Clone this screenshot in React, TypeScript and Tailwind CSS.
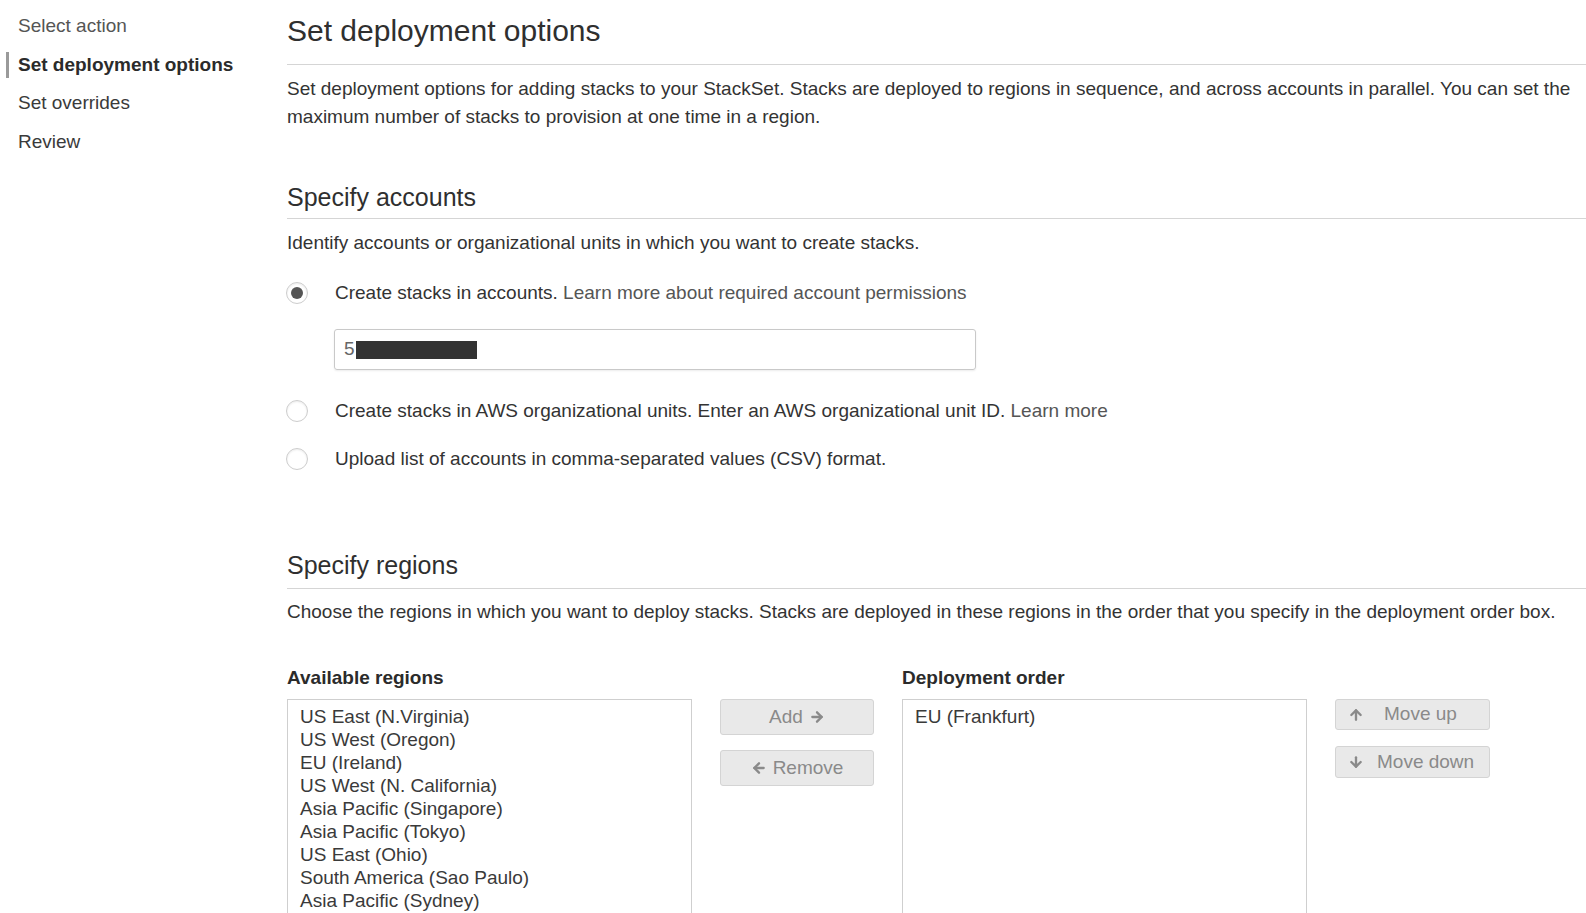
import { ArrowRight, ArrowLeft, ArrowUp, ArrowDown } from 'lucide-react';

const steps = ['Select action', 'Set deployment options', 'Set overrides', 'Review'];

const regions = [
  'US East (N.Virginia)',
  'US West (Oregon)',
  'EU (Ireland)',
  'US West (N. California)',
  'Asia Pacific (Singapore)',
  'Asia Pacific (Tokyo)',
  'US East (Ohio)',
  'South America (Sao Paulo)',
  'Asia Pacific (Sydney)',
];

function Radio({ checked }: { checked?: boolean }) {
  return (
    <span className="flex h-[22px] w-[22px] items-center justify-center rounded-full border border-[#cdcdcd] bg-white shadow-[inset_0_1px_2px_rgba(0,0,0,0.08)]">
      {checked && <span className="h-[12px] w-[12px] rounded-full bg-[#555]" />}
    </span>
  );
}

function GrayButton({ children, className }: { children: React.ReactNode; className: string }) {
  return (
    <button
      type="button"
      disabled
      className={`flex items-center rounded-[3px] border border-[#d4d4d4] bg-[#e9e9e9] text-[19px] text-[#8a8a8a] ${className}`}
    >
      {children}
    </button>
  );
}

export default function App() {
  return (
    <div
      className="flex h-[913px] w-[1586px] overflow-hidden bg-white text-[#333]"
      style={{ fontFamily: '"Liberation Sans", Arial, sans-serif' }}
    >
      {/* Step nav */}
      <nav className="w-[287px] shrink-0 pt-[7px]">
        {steps.map((s, i) => (
          <div
            key={s}
            className={`flex h-[38.5px] items-center text-[19px] ${i === 1 ? 'font-bold text-[#2b2b2b]' : i === 0 ? 'text-[#555]' : 'text-[#3a3a3a]'}`}
          >
            <span className={`ml-[6px] mr-[9px] h-[26px] w-[3px] ${i === 1 ? 'bg-[#9a9a9a]' : ''}`} />
            {s}
          </div>
        ))}
      </nav>

      {/* Main */}
      <main className="block min-w-0 flex-1">
        <h1 className="pt-[14px] text-[30px] leading-[34px] text-[#2f2f2f]">Set deployment options</h1>
        <div className="mt-[16px] border-t border-[#d5d5d5]" />
        <p className="mt-[10px] pr-[4px] text-[19px] leading-[28px]">
          Set deployment options for adding stacks to your StackSet. Stacks are deployed to regions in sequence, and
          across accounts in parallel. You can set the maximum number of stacks to provision at one time in a region.
        </p>

        <h2 className="mt-[52px] text-[25px] leading-[28px] text-[#2f2f2f]">Specify accounts</h2>
        <div className="mt-[7px] border-t border-[#d5d5d5]" />
        <p className="mt-[10px] text-[19px] leading-[28px]">
          Identify accounts or organizational units in which you want to create stacks.
        </p>

        <div className="mt-[22px] flex h-[28px] items-center text-[19px]">
          <span className="ml-[-1px] w-[49px]">
            <Radio checked />
          </span>
          <span>
            Create stacks in accounts. <span className="text-[#555]">Learn more about required account permissions</span>
          </span>
        </div>

        <div className="ml-[47px] mt-[22px] flex h-[41px] w-[642px] items-center rounded-[3px] border border-[#c9c9c9] px-[9px] text-[19px] text-[#666] shadow-[0_1px_2px_rgba(0,0,0,0.08)]">
          5<span className="ml-[1px] h-[18px] w-[121px] bg-[#333]" />
        </div>

        <div className="mt-[27px] flex h-[28px] items-center text-[19px]">
          <span className="ml-[-1px] w-[49px]">
            <Radio />
          </span>
          <span>
            Create stacks in AWS organizational units. Enter an AWS organizational unit ID.{' '}
            <span className="text-[#555]">Learn more</span>
          </span>
        </div>

        <div className="mt-[20px] flex h-[28px] items-center text-[19px]">
          <span className="ml-[-1px] w-[49px]">
            <Radio />
          </span>
          <span>Upload list of accounts in comma-separated values (CSV) format.</span>
        </div>

        <h2 className="mt-[78px] text-[25px] leading-[28px] text-[#2f2f2f]">Specify regions</h2>
        <div className="mt-[9px] border-t border-[#d5d5d5]" />
        <p className="mt-[9px] text-[19px] leading-[28px]">
          Choose the regions in which you want to deploy stacks. Stacks are deployed in these regions in the order that
          you specify in the deployment order box.
        </p>

        <div className="mt-[40px] flex">
          {/* Available regions */}
          <div className="w-[405px] shrink-0">
            <div className="text-[19px] font-bold leading-[24px] text-[#2b2b2b]">Available regions</div>
            <div className="mt-[9px] h-[260px] border border-[#cfcfcf] pl-[12px] pt-[5px]">
              {regions.map((r) => (
                <div key={r} className="text-[19px] leading-[23px] text-[#3a3a3a]">
                  {r}
                </div>
              ))}
            </div>
          </div>

          <div className="ml-[28px] flex shrink-0 flex-col gap-[15px] pt-[33px]">
            <GrayButton className="h-[36px] w-[154px] justify-center gap-[6px]">
              Add <ArrowRight size={16} strokeWidth={3.5} />
            </GrayButton>
            <GrayButton className="h-[36px] w-[154px] justify-center gap-[6px]">
              <ArrowLeft size={16} strokeWidth={3.5} /> Remove
            </GrayButton>
          </div>

          {/* Deployment order */}
          <div className="ml-[28px] w-[405px] shrink-0">
            <div className="text-[19px] font-bold leading-[24px] text-[#2b2b2b]">Deployment order</div>
            <div className="mt-[9px] h-[260px] border border-[#cfcfcf] pl-[12px] pt-[5px]">
              <div className="text-[19px] leading-[23px] text-[#3a3a3a]">EU (Frankfurt)</div>
            </div>
          </div>

          <div className="ml-[28px] flex shrink-0 flex-col gap-[16px] pt-[33px]">
            <GrayButton className="h-[31px] w-[155px] pl-[12px]">
              <ArrowUp size={16} strokeWidth={3.5} />
              <span className="ml-[20px]">Move up</span>
            </GrayButton>
            <GrayButton className="h-[32px] w-[155px] pl-[12px]">
              <ArrowDown size={16} strokeWidth={3.5} />
              <span className="ml-[13px]">Move down</span>
            </GrayButton>
          </div>
        </div>
      </main>
    </div>
  );
}
